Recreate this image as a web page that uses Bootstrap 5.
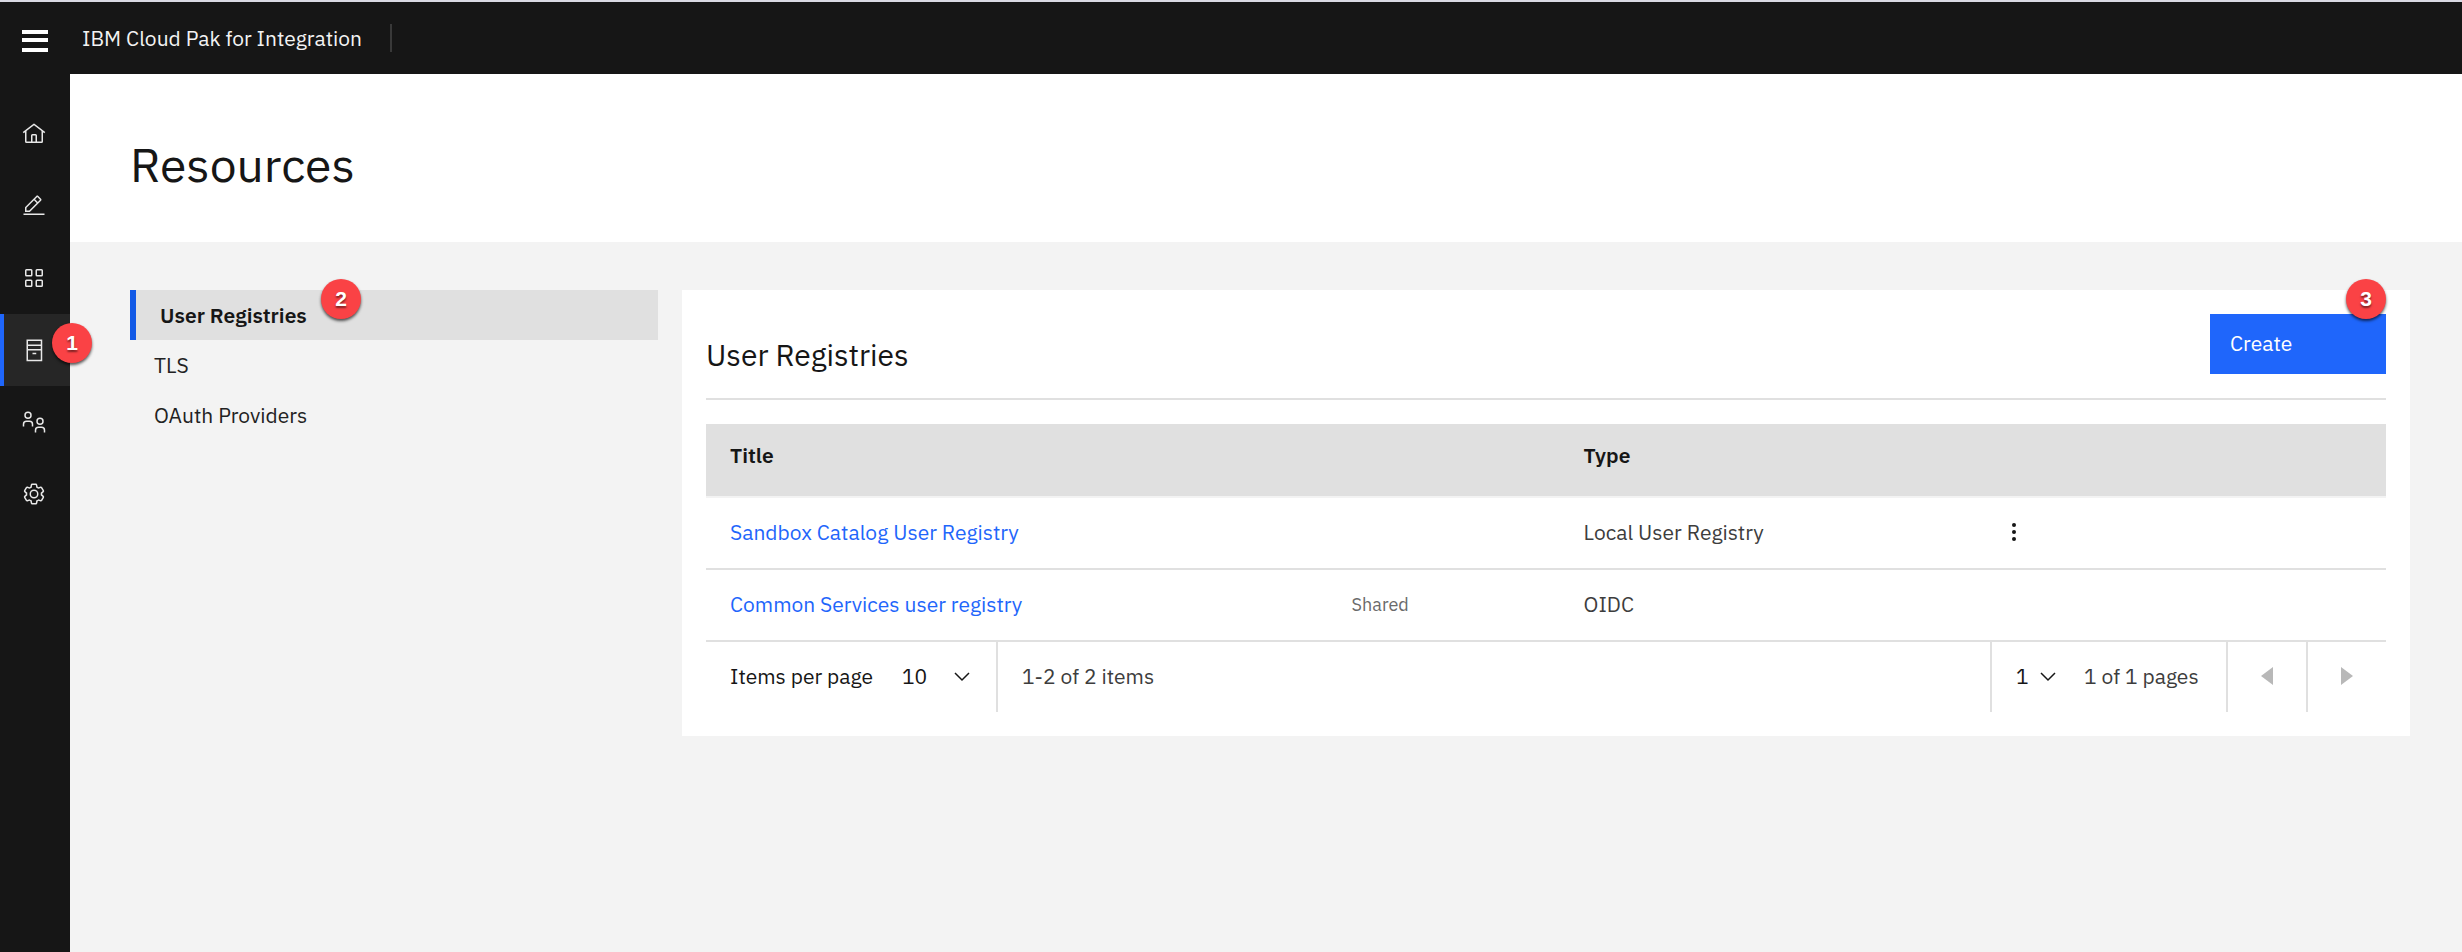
<!DOCTYPE html>
<html lang="en">
<head>
<meta charset="utf-8">
<meta name="viewport" content="width=device-width, initial-scale=1">
<title>Resources - IBM Cloud Pak for Integration</title>
<link href="https://cdn.jsdelivr.net/npm/bootstrap@5.3.0/dist/css/bootstrap.min.css" rel="stylesheet">
<style>
  :root { --ink: #161616; --ink-2: #3d3d3d; --line: #e0e0e0; --blue: #1f66fb; --canvas: #f3f3f3; }
  body { font-family: "IBM Plex Sans", Roboto, sans-serif; font-size: 21px; line-height: 30px; color: var(--ink); background: var(--canvas); }
  a { text-decoration: none; }
  .topbar { height: 74px; background: var(--ink); border-top: 2px solid #d9d9e3; }
  .menu-btn { width: 70px; padding: 6px 0 0 22px; border: 0; background: none; }
  .brand { color: #f3f3f3; margin-left: 12px; padding-right: 28px; border-right: 2px solid #393939; line-height: 28px; }
  .rail { width: 70px; background: var(--ink); padding-top: 24px; }
  .rail-item { height: 72px; padding-left: 22px; color: #e8e8e8; }
  .rail-item.active { background: #262626; border-left: 4px solid var(--blue); padding-left: 18px; }
  .page-head { padding: 62px 60px 50px; }
  .page-head h1 { font-size: 48px; line-height: 56px; font-weight: 400; margin: 0; }
  .panes { display: grid; grid-template-columns: 11fr 36fr; gap: 24px; padding: 48px 52px 48px 60px; }
  .side-item { padding: 10px 24px; color: #222; }
  .side-item.active { background: var(--line); border-left: 6px solid #1159e6; font-weight: 600; color: var(--ink); }
  .panel { padding: 24px; }
  .panel-head { padding-bottom: 24px; border-bottom: 2px solid var(--line); margin-bottom: 24px; }
  .panel-head h2 { font-size: 30px; line-height: 38px; font-weight: 400; margin: 0; }
  .create-btn { width: 176px; height: 60px; padding: 0 20px; border: 0; border-radius: 0; background: var(--blue); color: #fff; font-size: 21px; text-align: left; }
  .registries { table-layout: fixed; border-collapse: separate; border-spacing: 0; margin: 0; --bs-table-bg: transparent; }
  .registries th { height: 74px; background: var(--line); border-bottom: 2px solid var(--canvas); padding: 16px 24px; font-weight: 600; color: var(--ink); vertical-align: top; }
  .registries td { height: 72px; padding: 0 24px 2px; border-bottom: 2px solid var(--line); color: var(--ink-2); vertical-align: middle; }
  .registries a { color: var(--blue); }
  .col-name { width: 37%; } .col-share { width: 232px; } .col-type { width: 428px; }
  .shared { font-size: 18px; color: #6a6a6a; }
  .icon-btn { display: block; border: 0; padding: 0; background: none; color: var(--ink); line-height: 0; }
  .icon-btn svg { display: block; }
  .pager { height: 70px; color: var(--ink-2); }
  .pager label, .pager span { padding-bottom: 2px; }
  .pager label { color: var(--ink); padding-left: 24px; width: 172px; }
  .pager-select { border: 0; border-radius: 0; padding: 0 0 2px 24px; height: 70px; font-size: 21px; line-height: 30px; color: var(--ink); background: transparent url("data:image/svg+xml,%3Csvg xmlns='http://www.w3.org/2000/svg' viewBox='0 0 24 24'%3E%3Cpath d='M5 8l7 7 7-7' fill='none' stroke='%23161616' stroke-width='1.500'/%3E%3C/svg%3E") no-repeat right 22px center / 24px 24px; }
  .per-page { width: 120px; border-right: 2px solid var(--line); }
  .page-no { width: 94px; border-left: 2px solid var(--line); background-position: right 24px center; }
  .page-total { width: 142px; }
  .step-btn { width: 80px; border: 0; border-left: 2px solid var(--line); background: none; padding: 0 0 2px; color: #b8b8b8; }
  .step-btn svg { display: block; margin: 0 auto; }
  .callout { position: absolute; z-index: 5; width: 40px; height: 40px; border-radius: 50%; background: #fa4245; color: #fff; font: 700 21px/40px "Liberation Sans", sans-serif; text-align: center; text-shadow: 0 2px 2px rgba(0,0,0,.5); box-shadow: 0 2px 3px rgba(0,0,0,.65); }
  .callout-rail { left: 48px; top: 9px; }
  .callout-side { left: 185px; top: -11px; }
  .callout-create { right: 0; top: -35px; }
</style>
</head>
<body class="d-flex flex-column min-vh-100">
<header class="topbar d-flex align-items-center">
  <button class="menu-btn" type="button" aria-label="Menu">
    <svg class="d-block" width="26" height="22" fill="#fff"><path d="M0 0h26v4H0zM0 8h26v4H0zM0 18h26v4H0z"/></svg>
  </button>
  <div class="brand">IBM Cloud Pak for Integration</div>
</header>
<div class="d-flex flex-grow-1">
  <nav class="rail flex-shrink-0" aria-label="Main">
    <a href="#" class="rail-item d-flex align-items-center" aria-label="Home"><svg width="24" height="24" viewBox="0 0 32 32" fill="currentColor"><path d="M16.61,2.21a1,1,0,0,0-1.24,0L1,13.42,2.24,15,4,13.62V26a2,2,0,0,0,2,2H26a2,2,0,0,0,2-2V13.63L29.76,15,31,13.43ZM18,26H14V18h4Zm2,0V18a2,2,0,0,0-2-2H14a2,2,0,0,0-2,2v8H6V12.06L16,4.27l10,7.8V26Z"/></svg></a>
    <a href="#" class="rail-item d-flex align-items-center" aria-label="Develop"><svg width="24" height="24" viewBox="0 0 32 32" fill="currentColor"><path d="M2 26H30V28H2zM25.4,9c.8-.8.8-2,0-2.800l-3.600-3.600c-.8-.8-2-.8-2.800,0l-15,15V24h6.400L25.4,9zM20.4,4L24,7.6l-3,3L17.4,7L20.4,4zM6,22v-3.600l10-10l3.600,3.600l-10,10H6z"/></svg></a>
    <a href="#" class="rail-item d-flex align-items-center" aria-label="Manage"><svg width="24" height="24" viewBox="0 0 32 32" fill="none" stroke="currentColor" stroke-width="2"><rect x="5" y="5" width="8" height="8" rx="1"/><rect x="19" y="5" width="8" height="8" rx="1"/><rect x="5" y="19" width="8" height="8" rx="1"/><rect x="19" y="19" width="8" height="8" rx="1"/></svg></a>
    <a href="#" class="rail-item active d-flex align-items-center position-relative" aria-label="Resources" aria-current="page"><svg width="24" height="24" viewBox="0 0 32 32" fill="none" stroke="currentColor" stroke-width="2"><path d="M7 3h19v27H7zM7 9.500h19M7 15.500h19M14 20.500h5"/></svg><span class="callout callout-rail">1</span></a>
    <a href="#" class="rail-item d-flex align-items-center" aria-label="Members"><svg width="24" height="24" viewBox="0 0 32 32" fill="none" stroke="currentColor" stroke-width="2"><circle cx="8" cy="7" r="4"/><path d="M2 22v-3a4 4 0 0 1 4-4h4a4 4 0 0 1 4 4v3"/><circle cx="24" cy="15" r="4"/><path d="M18 30v-3a4 4 0 0 1 4-4h4a4 4 0 0 1 4 4v3"/></svg></a>
    <a href="#" class="rail-item d-flex align-items-center" aria-label="Settings"><svg width="24" height="24" viewBox="0 0 32 32" fill="currentColor"><path d="M27,16.76c0-.25,0-.5,0-.76s0-.51,0-.77l1.92-1.68A2,2,0,0,0,29.3,11L26.94,7a2,2,0,0,0-1.73-1,2,2,0,0,0-.64.1l-2.43.82a11.35,11.35,0,0,0-1.31-.75l-.51-2.52a2,2,0,0,0-2-1.61H13.64a2,2,0,0,0-2,1.61l-.51,2.52a11.48,11.48,0,0,0-1.32.75L7.43,6.06A2,2,0,0,0,6.79,6,2,2,0,0,0,5.06,7L2.7,11a2,2,0,0,0,.41,2.51L5,15.24c0,.25,0,.5,0,.76s0,.51,0,.77L3.11,18.45A2,2,0,0,0,2.7,21L5.06,25a2,2,0,0,0,1.73,1,2,2,0,0,0,.64-.1l2.43-.82a11.35,11.35,0,0,0,1.31.75l.51,2.52a2,2,0,0,0,2,1.61h4.72a2,2,0,0,0,2-1.61l.51-2.52a11.48,11.48,0,0,0,1.32-.75l2.42.82a2,2,0,0,0,.64.1,2,2,0,0,0,1.73-1L29.3,21a2,2,0,0,0-.41-2.51ZM25.21,24l-3.43-1.16a8.86,8.86,0,0,1-2.71,1.57L18.36,28H13.64l-.71-3.55a9.36,9.36,0,0,1-2.7-1.57L6.79,24,4.43,20l2.72-2.4a8.9,8.9,0,0,1,0-3.13L4.43,12,6.79,8l3.43,1.16a8.86,8.86,0,0,1,2.71-1.57L13.64,4h4.72l.71,3.55a9.36,9.36,0,0,1,2.7,1.57L25.21,8,27.57,12l-2.72,2.4a8.9,8.9,0,0,1,0,3.13L27.57,20ZM16,22a6,6,0,1,1,6-6A5.94,5.94,0,0,1,16,22Zm0-10a3.91,3.91,0,0,0-4,4,3.91,3.91,0,0,0,4,4,3.91,3.91,0,0,0,4-4A3.91,3.91,0,0,0,16,12Z"/></svg></a>
  </nav>
  <main class="flex-grow-1">
    <div class="page-head bg-white"><h1>Resources</h1></div>
    <div class="panes">
      <nav class="d-flex flex-column" aria-label="Resources">
        <a href="#" class="side-item active position-relative" aria-current="page">User Registries<span class="callout callout-side">2</span></a>
        <a href="#" class="side-item">TLS</a>
        <a href="#" class="side-item">OAuth Providers</a>
      </nav>
      <section class="panel bg-white">
        <div class="panel-head d-flex justify-content-between align-items-end">
          <h2>User Registries</h2>
          <button type="button" class="btn create-btn position-relative">Create<span class="callout callout-create">3</span></button>
        </div>
        <table class="table registries">
          <thead><tr><th class="col-name">Title</th><th class="col-share"></th><th class="col-type">Type</th><th></th></tr></thead>
          <tbody>
            <tr><td><a href="#">Sandbox Catalog User Registry</a></td><td></td><td>Local User Registry</td><td><button type="button" class="icon-btn" aria-label="Options"><svg width="4" height="18" viewBox="0 0 4 18" fill="currentColor"><circle cx="2" cy="2" r="2"/><circle cx="2" cy="9" r="2"/><circle cx="2" cy="16" r="2"/></svg></button></td></tr>
            <tr><td><a href="#">Common Services user registry</a></td><td><span class="shared">Shared</span></td><td>OIDC</td><td></td></tr>
          </tbody>
        </table>
        <div class="pager d-flex align-items-center">
          <label for="perPage">Items per page</label>
          <select id="perPage" class="form-select pager-select per-page"><option>10</option><option>25</option><option>50</option></select>
          <span class="ps-4">1-2 of 2 items</span>
          <select id="pageNo" class="form-select pager-select page-no ms-auto" aria-label="Page number"><option>1</option></select>
          <span class="page-total">1 of 1 pages</span>
          <button type="button" class="step-btn h-100" aria-label="Previous page" disabled><svg width="12" height="18" fill="currentColor"><path d="M12 0v18L0 9z"/></svg></button>
          <button type="button" class="step-btn h-100" aria-label="Next page" disabled><svg width="12" height="18" fill="currentColor"><path d="M0 0v18l12-9z"/></svg></button>
        </div>
      </section>
    </div>
  </main>
</div>
<script src="https://cdn.jsdelivr.net/npm/bootstrap@5.3.0/dist/js/bootstrap.bundle.min.js"></script>
</body>
</html>
